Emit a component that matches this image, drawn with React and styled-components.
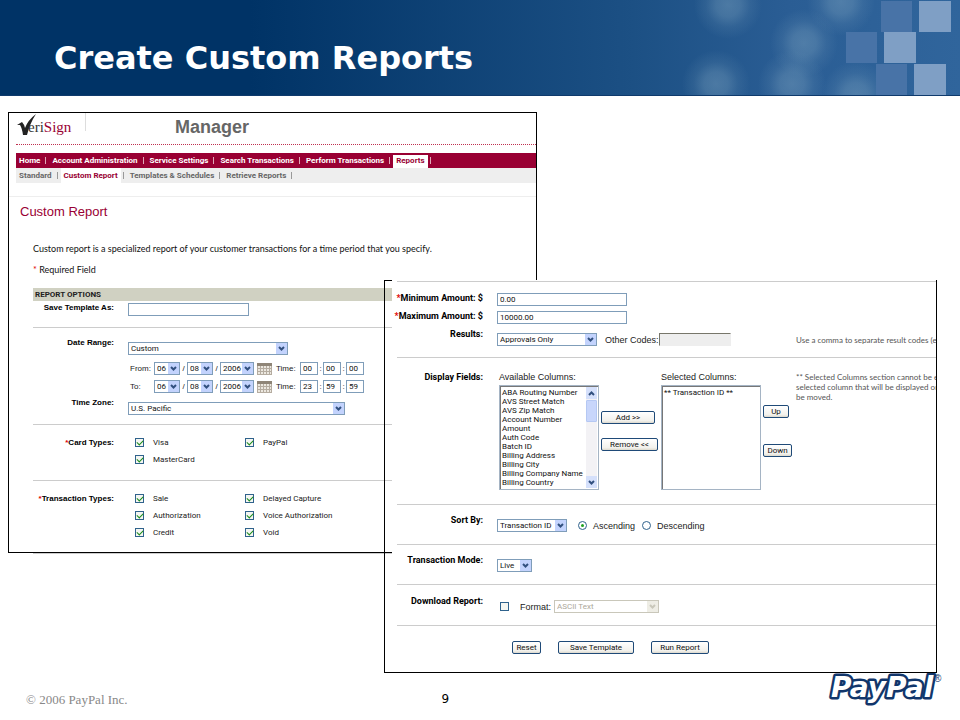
import React from 'react'
import styled, { createGlobalStyle } from 'styled-components'

const SANS = "'Liberation Sans', Arial, sans-serif"
const CONTROL = "Roboto, 'Liberation Sans', Arial, sans-serif"
const COPY = "Lato, 'Liberation Sans', Arial, sans-serif"
const MAROON = '#990033'
const XP_BORDER = '#7f9db9'

const GlobalStyle = createGlobalStyle`
  * {
    box-sizing: border-box;
  }

  body {
    margin: 0;
    background-color: white;
    color: #222;
    font-family: ${SANS};
    font-size: 8px;
    line-height: 10px;
  }

  input, select, button {
    margin: 0;
    font-family: ${CONTROL};
    font-size: 8px;
    color: #111;
  }
`

const SlideHeader = styled.header`
  position: relative;
  display: flex;
  align-items: center;
  height: 96px;
  padding-left: 54px;
  padding-top: 21px;
  border-bottom: 1px solid #0f3a6c;
  background: linear-gradient(90deg, #003366 26%, #1c5084 66%, #2a5d94 82%, #30659c 100%);
`

const SlideTitle = styled.h1`
  margin: 0;
  color: white;
  font-family: 'DejaVu Sans', Verdana, sans-serif;
  font-size: 32px;
  font-weight: 700;
  line-height: 36px;
`

const Pattern = styled.svg`
  position: absolute;
  top: 0;
  right: 0;
`

const Stage = styled.main`
  display: grid;
  grid-template-columns: 376fr 153fr 400fr;
  grid-template-rows: 168px 273px auto;
  padding: 16px 23px 0 8px;
`

const MainPanel = styled.section`
  grid-column: 1 / 3;
  grid-row: 1 / 3;
  min-width: 0;
  border: 1px solid black;
`

const DetailPanel = styled.section`
  grid-column: 2 / 4;
  grid-row: 2 / 4;
  min-width: 0;
  border: 1px solid black;
`

const Sheet = styled.form`
  margin: -1px 0 0 7px;
  padding: 1px 0 18px 5px;
  overflow: hidden;
  background-color: white;
`

const Brand = styled.div`
  display: flex;
  align-items: flex-start;
  height: 32px;
  margin-left: 7px;
  border-bottom: 1px dotted #c0304f;
`

const BrandCell = styled.div`
  width: 70px;
  height: 18px;
  border-right: 1px solid #ddd;
`

const BrandTitle = styled.h2`
  margin: 4px 0 0 89px;
  color: #666;
  font-size: 18px;
  line-height: 20px;
`

const NavBar = styled.nav`
  display: flex;
  align-items: stretch;
  height: 15px;
  margin: ${props => (props.$sub ? '0 0 0 7px' : '8px 0 0 7px')};
  background-color: ${props => (props.$sub ? '#eee' : MAROON)};
  color: ${props => (props.$sub ? '#999' : '#e0a8b8')};
`

const NavLink = styled.a`
  padding: 0 3px;
  color: ${props => (props.$active ? MAROON : props.$sub ? '#666' : 'white')};
  background-color: ${props => (props.$active ? 'white' : 'transparent')};
  border-top: ${props => (props.$sub ? 0 : 2)}px solid ${props => (props.$sub ? 'white' : MAROON)};
  font-family: ${CONTROL};
  font-weight: 700;
  line-height: ${props => (props.$sub ? 15 : 11)}px;
  text-decoration: none;
  white-space: nowrap;
`

const Divider = styled.span`
  width: 1px;
  height: 7px;
  margin: 4px 3px 0 2px;
  background-color: currentColor;
`

const PageTitle = styled.h3`
  margin: 13px 0 0;
  padding: 7px 0 0 11px;
  border-top: 1px solid #eee;
  color: ${MAROON};
  font-size: 13px;
  font-weight: 400;
  line-height: 16px;
`

const Options = styled.form`
  margin-left: 24px;
  padding-top: 24px;
`

const Intro = styled.p`
  margin: 0 0 11px;
  color: #111;
  font-family: ${COPY};
  font-size: 9px;
  white-space: nowrap;
`

const Star = styled.span`
  color: #e00000;
`

const OptionsHeading = styled.h4`
  margin: 13px 0 0;
  padding-left: 2px;
  background-color: #d0d1c2;
  font-family: ${CONTROL};
  font-size: 8px;
  line-height: 13px;
`

const Group = styled.div`
  display: flex;
  flex-direction: column;
  gap: 5px;
  padding: ${props => props.$pad};
  border-bottom: 1px solid #ccc;
`

const DateRows = styled.div`
  display: flex;
  flex-direction: column;
  gap: 5px;
  padding-top: 2px;
`

const FormRow = styled.div`
  display: grid;
  grid-template-columns: ${props => (props.$wide ? 86 : 81)}px 1fr;
  column-gap: 14px;
  align-items: start;
`

const Label = styled.label`
  justify-self: end;
  color: black;
  font-family: ${props => (props.$large ? CONTROL : SANS)};
  font-size: ${props => (props.$large ? 9 : 8)}px;
  font-weight: 700;
  white-space: nowrap;
`

const Fields = styled.div`
  display: flex;
  align-items: center;
  padding-top: ${props => (props.$drop ? 4 : 0)}px;
  padding-left: ${props => props.$indent || 0}px;
`

const Caption = styled.label`
  width: ${props => (props.$width ? props.$width + 'px' : 'auto')};
  font-size: ${props => (props.$large ? 9 : 8)}px;
  color: #222;
  white-space: nowrap;
`

const Separator = styled.span`
  width: ${props => props.$width || 7}px;
  text-align: center;
`

const TextInput = styled.input`
  width: ${props => props.$width}px;
  height: 13px;
  padding: 0 2px;
  border: 1px solid ${XP_BORDER};
  border-radius: 0;
  background-color: white;

  &:disabled {
    border-color: #77766a #eee #eee #77766a;
    background-color: #eee;
  }
`

const SelectWrap = styled.span`
  display: grid;
  width: ${props => props.$width}px;
`

const NativeSelect = styled.select`
  grid-area: 1 / 1;
  width: 100%;
  height: 13px;
  padding: 0 2px;
  border: 1px solid ${XP_BORDER};
  border-radius: 0;
  background-color: white;
  appearance: none;

  &:disabled {
    border-color: #c9c7ba;
    color: #aca899;
    opacity: 1;
  }
`

const Arrow = styled.span`
  display: grid;
  grid-area: 1 / 1;
  place-content: center;
  align-self: center;
  justify-self: end;
  width: 11px;
  height: 11px;
  margin-right: 1px;
  background-color: ${props => (props.$off ? '#eeede5' : '#c3d3fd')};
  color: ${props => (props.$off ? '#c9c7ba' : '#32507f')};
  pointer-events: none;
`

const CheckGrid = styled.div`
  display: grid;
  grid-template-columns: 110px 110px;
  row-gap: 8px;
  padding-left: 7px;
`

const CheckLabel = styled.label`
  display: flex;
  align-items: center;
  gap: 9px;
  height: 9px;
  font-family: ${CONTROL};
`

const Checkbox = styled.input`
  display: grid;
  place-content: center;
  width: 9px;
  height: 9px;
  border: 1px solid #2f628c;
  background-color: #f4f6f2;
  appearance: none;

  &:checked::after {
    content: '';
    width: 3px;
    height: 5px;
    margin-top: -1px;
    border: solid #1a8c1a;
    border-width: 0 1px 1px 0;
    transform: rotate(45deg);
  }
`

const Radio = styled.input`
  display: grid;
  place-content: center;
  width: 9px;
  height: 9px;
  border: 1px solid #2f628c;
  border-radius: 50%;
  background-color: white;
  appearance: none;

  &:checked::after {
    content: '';
    width: 3px;
    height: 3px;
    border-radius: 50%;
    background-color: #21a121;
  }
`

const Button = styled.button`
  height: 13px;
  padding: 0 2px;
  border: 1px solid #1f4a78;
  border-radius: 2px;
  background: linear-gradient(white, #f2f1ec 80%, #dcd8cc);
  min-width: ${props => props.$width}px;
  line-height: 11px;
  white-space: nowrap;
`

const ListColumn = styled.div`
  display: flex;
  flex-direction: column;
  gap: 3px;
  width: 100px;
`

const ListFrame = styled.div`
  display: flex;
  height: 105px;
  padding: 1px;
  border: 1px solid #a5b4c4;
  box-shadow: inset 1px 1px 0 #777;
`

const ListBox = styled.select`
  flex: 1;
  min-width: 0;
  padding: 1px 0;
  border: 0;
  outline: 0;
  background-color: transparent;
  overflow: hidden;
  scrollbar-width: none;

  option {
    min-height: 9px;
    padding: 0 1px;
  }
`

const ScrollTrack = styled.div`
  display: flex;
  flex-direction: column;
  width: 11px;
  background-color: #f3f2f5;
`

const ScrollEnd = styled.span`
  display: grid;
  place-content: center;
  height: 12px;
  margin-top: ${props => (props.$bottom ? 'auto' : 0)};
  background-color: #d5e0fb;
  color: #32507f;
`

const ScrollThumb = styled.span`
  height: 22px;
  margin-top: 1px;
  border: 1px solid #b5c8f3;
  border-radius: 1px;
  background-color: #c8d6fb;
`

const ButtonStack = styled.div`
  display: flex;
  flex-direction: column;
  align-items: flex-start;
  gap: ${props => props.$gap}px;
  width: ${props => props.$width}px;
  padding-top: ${props => props.$top}px;
`

const Hint = styled.p`
  margin: 0 0 0 ${props => props.$left || 0}px;
  color: #555;
  font-family: ${COPY};
  white-space: nowrap;
`

const ColumnPicker = styled.div`
  display: flex;
  align-items: flex-start;
  gap: 2px;
  padding-left: 2px;
`

const Actions = styled.div`
  display: flex;
  gap: 17px;
  padding: 15px 0 0 115px;
`

const SlideFooter = styled.footer`
  display: grid;
  grid-template-columns: 416fr 387fr auto;
  padding: 0 18px 0 26px;
`

const Copyright = styled.p`
  margin: 19px 0 0;
  color: #888;
  font-family: 'Liberation Serif', 'Times New Roman', serif;
  font-size: 13px;
  line-height: 16px;
`

const PageNumber = styled.p`
  margin: 18px 0 0;
  color: black;
  font-family: 'DejaVu Sans', Verdana, sans-serif;
  font-size: 12px;
  line-height: 16px;
`

const navItems = ['Home', 'Account Administration', 'Service Settings', 'Search Transactions', 'Perform Transactions', 'Reports']
const subItems = ['Standard', 'Custom Report', 'Templates & Schedules', 'Retrieve Reports']
const cardTypes = ['Visa', 'PayPal', 'MasterCard']
const transactionTypes = ['Sale', 'Delayed Capture', 'Authorization', 'Voice Authorization', 'Credit', 'Void']
const availableColumns = [
  'ABA Routing Number',
  'AVS Street Match',
  'AVS Zip Match',
  'Account Number',
  'Amount',
  'Auth Code',
  'Batch ID',
  'Billing Address',
  'Billing City',
  'Billing Company Name',
  'Billing Country',
]

const Chevron = ({ up }) => (
  <svg width="7" height="5" viewBox="0 0 7 5" fill="none" stroke="currentColor" strokeWidth="2">
    <path d={up ? 'M1 4 L3.5 1.5 L6 4' : 'M1 1 L3.5 3.5 L6 1'} />
  </svg>
)

const Select = ({ id, label, width, value, disabled }) => (
  <SelectWrap $width={width}>
    <NativeSelect id={id} aria-label={label} disabled={disabled}>
      <option>{value}</option>
    </NativeSelect>
    <Arrow $off={disabled}><Chevron /></Arrow>
  </SelectWrap>
)

const Menu = ({ items, active, sub }) => (
  <NavBar $sub={sub}>
    {items.map(item => (
      <React.Fragment key={item}>
        <NavLink href="#" $sub={sub} $active={item === active}>{item}</NavLink>
        <Divider />
      </React.Fragment>
    ))}
  </NavBar>
)

const Checks = ({ items }) => (
  <CheckGrid>
    {items.map(item => (
      <CheckLabel key={item}>
        <Checkbox type="checkbox" defaultChecked />
        {item}
      </CheckLabel>
    ))}
  </CheckGrid>
)

const CalendarIcon = () => (
  <svg width="15" height="12" viewBox="0 0 15 12">
    <rect width="15" height="12" fill="#ece8e0" />
    <rect width="15" height="3" fill="#8f8577" />
    <path d="M0 5.5H15M0 8.5H15M0 11.5H15M.5 3V12M3.5 3V12M6.5 3V12M9.5 3V12M12.5 3V12M14.5 3V12" stroke="#b5aca0" />
  </svg>
)

const DateRow = ({ name, time }) => (
  <FormRow>
    <span />
    <Fields $indent={2}>
      <Caption $width={24} htmlFor={name + '-month'}>{name}:</Caption>
      <Select id={name + '-month'} width={26} value="06" />
      <Separator>/</Separator>
      <Select label={name + ' day'} width={26} value="08" />
      <Separator>/</Separator>
      <Select label={name + ' year'} width={34} value="2006" />
      <Separator $width={3} />
      <CalendarIcon />
      <Separator $width={4} />
      <Caption $width={24} htmlFor={name + '-hour'}>Time:</Caption>
      <TextInput id={name + '-hour'} $width={18} defaultValue={time[0]} />
      <Separator $width={5}>:</Separator>
      <TextInput aria-label={name + ' minute'} $width={18} defaultValue={time[1]} />
      <Separator $width={5}>:</Separator>
      <TextInput aria-label={name + ' second'} $width={18} defaultValue={time[2]} />
    </Fields>
  </FormRow>
)

const VeriSignLogo = () => (
  <svg width="58" height="26" viewBox="0 0 58 26">
    <path d="M1 12 L6 9 Q8 11 9 15 Q12 7 20 1 Q14 10 11 22 L7 22 Q6 15 4 12 Z" fill="#222" />
    <text x="12" y="19" fontFamily="'Liberation Serif', serif" fontSize="15" fill="#333">
      eri<tspan fill={MAROON}>Sign</tspan>
    </text>
  </svg>
)

const PayPalLogo = () => (
  <svg width="114" height="36" viewBox="0 0 114 36">
    <text
      x="3"
      y="24"
      fontFamily="'DejaVu Sans', Verdana, sans-serif"
      fontSize="28"
      fontWeight="700"
      fontStyle="italic"
      fill="white"
      stroke="#11366b"
      strokeWidth="5"
      strokeLinejoin="round"
      paintOrder="stroke"
    >
      PayPal
    </text>
    <text x="106" y="9" fontFamily={SANS} fontSize="10" fill="#11366b">®</text>
  </svg>
)

const HeaderPattern = () => (
  <Pattern width="320" height="95" viewBox="0 0 320 95">
    <defs>
      <radialGradient id="glow">
        <stop offset="0" stopColor="#7da3bf" stopOpacity="0.45" />
        <stop offset="0.35" stopColor="#7da3bf" stopOpacity="0.36" />
        <stop offset="0.65" stopColor="#7da3bf" stopOpacity="0.14" />
        <stop offset="1" stopColor="#7da3bf" stopOpacity="0" />
      </radialGradient>
    </defs>
    {[[88, 5], [201, 2], [164, 43], [76, 84], [152, 84], [216, 95]].map(([x, y]) => (
      <circle key={x} cx={x} cy={y} r="34" fill="url(#glow)" />
    ))}
    {[[241, 1], [206, 32], [236, 64]].map(([x, y]) => (
      <rect key={x} x={x} y={y} width="31" height="31" fill="#4873a7" />
    ))}
    {[[279, 1], [244, 32], [274, 64]].map(([x, y]) => (
      <rect key={x} x={x} y={y} width="32" height="31" fill="#7f9fc5" />
    ))}
  </Pattern>
)

const ReportOptions = () => (
  <MainPanel>
    <Brand>
      <BrandCell><VeriSignLogo /></BrandCell>
      <BrandTitle>Manager</BrandTitle>
    </Brand>
    <Menu items={navItems} active="Reports" />
    <Menu items={subItems} active="Custom Report" sub />
    <PageTitle>Custom Report</PageTitle>
    <Options>
      <Intro>Custom report is a specialized report of your customer transactions for a time period that you specify.</Intro>
      <Intro><Star>*</Star> Required Field</Intro>
      <OptionsHeading>REPORT OPTIONS</OptionsHeading>
      <Group $pad="2px 0 11px">
        <FormRow>
          <Label htmlFor="template">Save Template As:</Label>
          <Fields><TextInput id="template" $width={121} /></Fields>
        </FormRow>
      </Group>
      <Group $pad="10px 0 9px">
        <FormRow>
          <Label htmlFor="range">Date Range:</Label>
          <Fields $drop><Select id="range" width={160} value="Custom" /></Fields>
        </FormRow>
        <DateRows>
          <DateRow name="From" time={['00', '00', '00']} />
          <DateRow name="To" time={['23', '59', '59']} />
        </DateRows>
        <FormRow>
          <Label htmlFor="zone">Time Zone:</Label>
          <Fields $drop><Select id="zone" width={217} value="U.S. Pacific" /></Fields>
        </FormRow>
      </Group>
      <Group $pad="13px 0 16px">
        <FormRow>
          <Label as="span"><Star>*</Star>Card Types:</Label>
          <Checks items={cardTypes} />
        </FormRow>
      </Group>
      <Group $pad="13px 0 16px">
        <FormRow>
          <Label as="span"><Star>*</Star>Transaction Types:</Label>
          <Checks items={transactionTypes} />
        </FormRow>
      </Group>
    </Options>
  </MainPanel>
)

const ReportDetails = () => (
  <DetailPanel>
    <Sheet>
      <Group $pad="0" />
      <Group $pad="11px 0">
        <FormRow $wide>
          <Label $large htmlFor="min"><Star>*</Star>Minimum Amount: $</Label>
          <Fields><TextInput id="min" $width={130} defaultValue="0.00" /></Fields>
        </FormRow>
        <FormRow $wide>
          <Label $large htmlFor="max"><Star>*</Star>Maximum Amount: $</Label>
          <Fields><TextInput id="max" $width={130} defaultValue="10000.00" /></Fields>
        </FormRow>
        <FormRow $wide>
          <Label $large htmlFor="results">Results:</Label>
          <Fields $drop>
            <Select id="results" width={100} value="Approvals Only" />
            <Separator $width={8} />
            <Caption $large $width={54} htmlFor="codes">Other Codes:</Caption>
            <TextInput id="codes" $width={72} disabled />
            <Hint $left={65}>Use a comma to separate result codes (e</Hint>
          </Fields>
        </FormRow>
      </Group>
      <Group $pad="14px 0">
        <FormRow $wide>
          <Label $large htmlFor="available">Display Fields:</Label>
          <ColumnPicker>
            <ListColumn>
              <Caption $large htmlFor="available">Available Columns:</Caption>
              <ListFrame>
                <ListBox id="available" multiple size={11}>
                  {availableColumns.map(name => <option key={name}>{name}</option>)}
                </ListBox>
                <ScrollTrack>
                  <ScrollEnd><Chevron up /></ScrollEnd>
                  <ScrollThumb />
                  <ScrollEnd $bottom><Chevron /></ScrollEnd>
                </ScrollTrack>
              </ListFrame>
            </ListColumn>
            <ButtonStack $top={39} $gap={14} $width={58}>
              <Button type="button" $width={54}>Add &gt;&gt;</Button>
              <Button type="button" $width={57}>Remove &lt;&lt;</Button>
            </ButtonStack>
            <ListColumn>
              <Caption $large htmlFor="selected">Selected Columns:</Caption>
              <ListFrame>
                <ListBox id="selected" multiple size={11}>
                  <option>** Transaction ID **</option>
                </ListBox>
              </ListFrame>
            </ListColumn>
            <ButtonStack $top={33} $gap={26} $width={31}>
              <Button type="button" $width={26}>Up</Button>
              <Button type="button" $width={29}>Down</Button>
            </ButtonStack>
            <Hint>
              ** Selected Columns section cannot be er<br />
              selected column that will be displayed on<br />
              be moved.
            </Hint>
          </ColumnPicker>
        </FormRow>
      </Group>
      <Group $pad="10px 0 12px">
        <FormRow $wide>
          <Label $large htmlFor="sort">Sort By:</Label>
          <Fields $drop>
            <Select id="sort" width={70} value="Transaction ID" />
            <Separator $width={11} />
            <Radio type="radio" name="order" id="asc" defaultChecked />
            <Separator $width={6} />
            <Caption $large $width={49} htmlFor="asc">Ascending</Caption>
            <Radio type="radio" name="order" id="desc" />
            <Separator $width={6} />
            <Caption $large htmlFor="desc">Descending</Caption>
          </Fields>
        </FormRow>
      </Group>
      <Group $pad="10px 0 12px">
        <FormRow $wide>
          <Label $large htmlFor="mode">Transaction Mode:</Label>
          <Fields $drop><Select id="mode" width={35} value="Live" /></Fields>
        </FormRow>
      </Group>
      <Group $pad="11px 0 12px">
        <FormRow $wide>
          <Label $large htmlFor="download">Download Report:</Label>
          <Fields $drop $indent={3}>
            <Checkbox type="checkbox" id="download" />
            <Separator $width={11} />
            <Caption $large $width={34} htmlFor="format">Format:</Caption>
            <Select id="format" width={105} value="ASCII Text" disabled />
          </Fields>
        </FormRow>
      </Group>
      <Actions>
        <Button type="reset" $width={29}>Reset</Button>
        <Button type="button" $width={76}>Save Template</Button>
        <Button type="button" $width={58}>Run Report</Button>
      </Actions>
    </Sheet>
  </DetailPanel>
)

const App = () => {
  return (
    <>
      <GlobalStyle />
      <SlideHeader>
        <HeaderPattern />
        <SlideTitle>Create Custom Reports</SlideTitle>
      </SlideHeader>
      <Stage>
        <ReportOptions />
        <ReportDetails />
      </Stage>
      <SlideFooter>
        <Copyright>© 2006 PayPal Inc.</Copyright>
        <PageNumber>9</PageNumber>
        <PayPalLogo />
      </SlideFooter>
    </>
  )
}

export default App
